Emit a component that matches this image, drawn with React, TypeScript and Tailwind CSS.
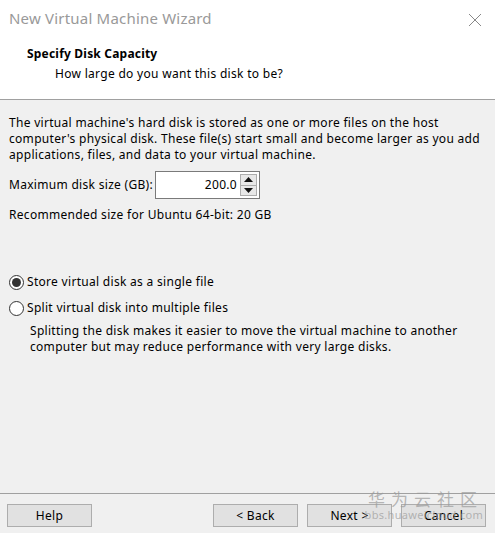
function WizButton({ label }: { label: string }) {
  return (
    <button className="h-[23px] w-[85px] border border-[#adadad] bg-[#e1e1e1] text-[12px] tracking-[0.3px] text-black">
      {label}
    </button>
  );
}

function Radio({ checked, label }: { checked: boolean; label: string }) {
  return (
    <div className="flex items-center gap-[3px]">
      <span className="flex h-[15px] w-[15px] items-center justify-center rounded-full border border-[#333] bg-white">
        {checked && <span className="h-[9px] w-[9px] rounded-full bg-[#333]" />}
      </span>
      <span>{label}</span>
    </div>
  );
}

export default function App() {
  return (
    <div
      className="relative flex h-[533px] w-[495px] flex-col bg-[#f0f0f0] text-[12px] leading-[16px] tracking-[0.3px] text-black"
      style={{ fontFamily: '"Noto Sans", "Open Sans", sans-serif' }}
    >
      {/* Header */}
      <div className="h-[100px] border-b border-[#a0a0a0] bg-white">
        <div className="flex items-center justify-between pl-[9px] pr-[13px] pt-[8px]">
          <span className="text-[15px] leading-[20px] tracking-[0.2px] text-[#999]">New Virtual Machine Wizard</span>
          <svg width="14" height="14" viewBox="0 0 14 14" className="mt-[3px]">
            <path d="M1 1L13 13M13 1L1 13" stroke="#888" strokeWidth="1" />
          </svg>
        </div>
        <div className="pl-[27px] pt-[18px] font-bold tracking-[0.2px]">Specify Disk Capacity</div>
        <div className="pl-[55px] pt-[4px]">How large do you want this disk to be?</div>
      </div>

      {/* Body */}
      <div className="flex-1 px-[9px] pt-[15px]">
        <p>
          The virtual machine's hard disk is stored as one or more files on the host
          <br />
          computer's physical disk. These file(s) start small and become larger as you add
          <br />
          applications, files, and data to your virtual machine.
        </p>

        <div className="mt-[8px] flex items-center">
          <span className="w-[146px]">Maximum disk size (GB):</span>
          <div className="flex h-[28px] w-[105px] items-stretch border border-[#7a7a7a] bg-white">
            <div className="flex flex-1 items-center justify-end pr-[3px]">200.0</div>
            <div className="my-[2px] mr-[2px] flex w-[17px] flex-col">
              <div className="flex flex-1 items-center justify-center border border-[#adadad] bg-[#e8e8e8]">
                <svg width="9" height="5" viewBox="0 0 9 5">
                  <path d="M0 5L4.5 0L9 5Z" fill="#111" />
                </svg>
              </div>
              <div className="flex flex-1 items-center justify-center border border-t-0 border-[#adadad] bg-[#e8e8e8]">
                <svg width="9" height="5" viewBox="0 0 9 5">
                  <path d="M0 0L4.5 5L9 0Z" fill="#111" />
                </svg>
              </div>
            </div>
          </div>
        </div>

        <div className="mt-[8px]">Recommended size for Ubuntu 64-bit: 20 GB</div>

        <div className="mt-[51px] flex flex-col gap-[10px]">
          <Radio checked label="Store virtual disk as a single file" />
          <Radio checked={false} label="Split virtual disk into multiple files" />
        </div>
        <p className="mt-[7px] pl-[21px]">
          Splitting the disk makes it easier to move the virtual machine to another
          <br />
          computer but may reduce performance with very large disks.
        </p>
      </div>

      {/* Footer */}
      <div className="h-[40px] border-t border-[#a0a0a0] px-[7px] pt-[10px]">
        <div className="flex items-center">
          <WizButton label="Help" />
          <div className="ml-auto flex gap-[9px] pr-[2px]">
            <WizButton label="< Back" />
            <WizButton label="Next >" />
            <WizButton label="Cancel" />
          </div>
        </div>
      </div>

      {/* watermark */}
      <div className="pointer-events-none absolute right-[12px] top-[489px] flex flex-col items-end text-[#9a9a9a]/70">
        <span
          className="text-[17px] leading-[20px] tracking-[6px]"
          style={{ fontFamily: '"Noto Sans CJK SC", sans-serif' }}
        >
          华为云社区
        </span>
        <span className="text-[11px] leading-[12px]">bbs.huaweicloud.com</span>
      </div>
    </div>
  );
}
